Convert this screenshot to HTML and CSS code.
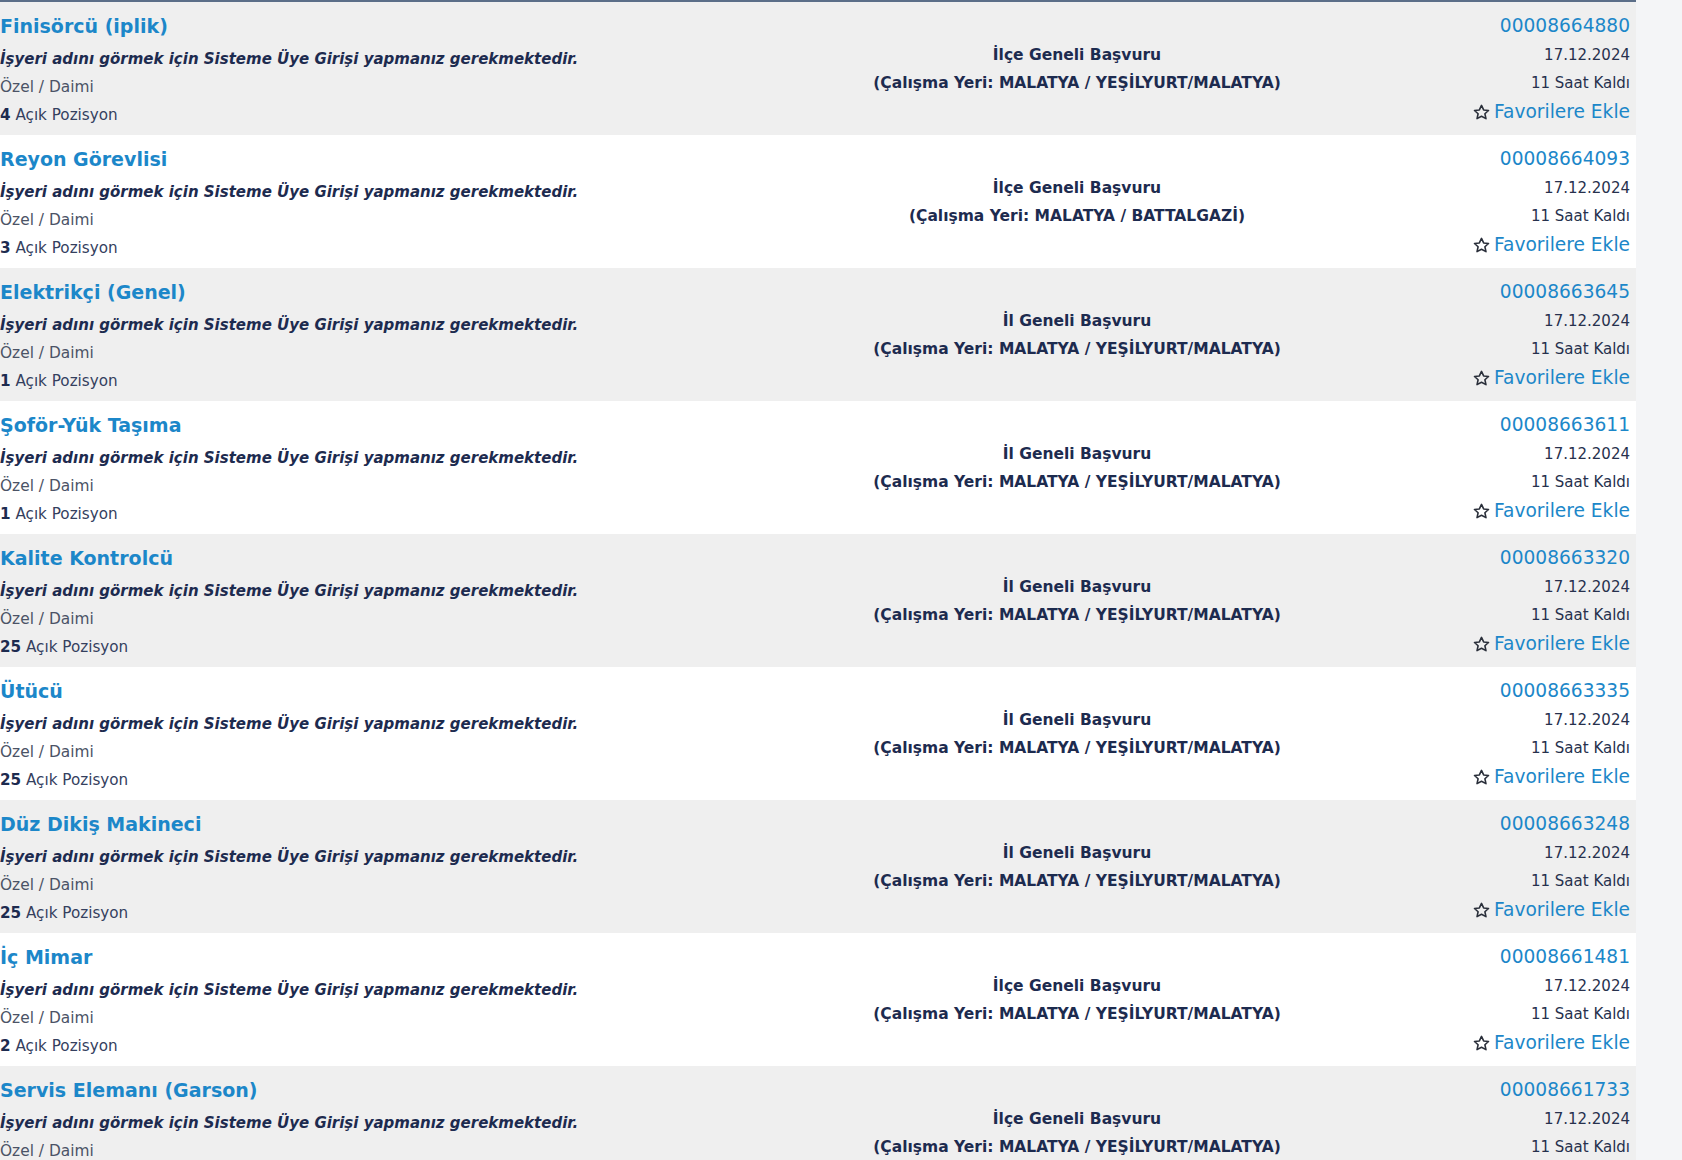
FILE: index.html
```html
<!DOCTYPE html>
<html lang="tr">
  <head>
    <meta charset="UTF-8" />
    <meta name="viewport" content="width=device-width, initial-scale=1.0" />
    <title>İş İlanları</title>
    <link rel="stylesheet" href="styles.css">
  </head>
  <body>
    <div id="page">
      <div id="jobList">
        <section class="job">
          <div class="jobInfo">
            <a class="jobTitle" href="#">Finisörcü (iplik)</a>
            <p class="employer">İşyeri adını görmek için Sisteme Üye Girişi yapmanız gerekmektedir.</p>
            <p class="jobType">Özel / Daimi</p>
            <p class="positions"><b>4</b> Açık Pozisyon</p>
          </div>
          <div class="jobPlace">
            <p>İlçe Geneli Başvuru</p>
            <p>(Çalışma Yeri: MALATYA / YEŞİLYURT/MALATYA)</p>
          </div>
          <div class="jobMeta">
            <a class="jobNo" href="#">00008664880</a>
            <p>17.12.2024</p>
            <p>11 Saat Kaldı</p>
            <a class="fav" href="#"><svg viewBox="0 0 16 16"><path d="M8 1.3l2 4.3 4.6.5-3.4 3.1 1 4.6L8 11.5l-4.2 2.3 1-4.6L1.4 6.1 6 5.6z"/></svg>Favorilere Ekle</a>
          </div>
        </section>
        <section class="job">
          <div class="jobInfo">
            <a class="jobTitle" href="#">Reyon Görevlisi</a>
            <p class="employer">İşyeri adını görmek için Sisteme Üye Girişi yapmanız gerekmektedir.</p>
            <p class="jobType">Özel / Daimi</p>
            <p class="positions"><b>3</b> Açık Pozisyon</p>
          </div>
          <div class="jobPlace">
            <p>İlçe Geneli Başvuru</p>
            <p>(Çalışma Yeri: MALATYA / BATTALGAZİ)</p>
          </div>
          <div class="jobMeta">
            <a class="jobNo" href="#">00008664093</a>
            <p>17.12.2024</p>
            <p>11 Saat Kaldı</p>
            <a class="fav" href="#"><svg viewBox="0 0 16 16"><path d="M8 1.3l2 4.3 4.6.5-3.4 3.1 1 4.6L8 11.5l-4.2 2.3 1-4.6L1.4 6.1 6 5.6z"/></svg>Favorilere Ekle</a>
          </div>
        </section>
        <section class="job">
          <div class="jobInfo">
            <a class="jobTitle" href="#">Elektrikçi (Genel)</a>
            <p class="employer">İşyeri adını görmek için Sisteme Üye Girişi yapmanız gerekmektedir.</p>
            <p class="jobType">Özel / Daimi</p>
            <p class="positions"><b>1</b> Açık Pozisyon</p>
          </div>
          <div class="jobPlace">
            <p>İl Geneli Başvuru</p>
            <p>(Çalışma Yeri: MALATYA / YEŞİLYURT/MALATYA)</p>
          </div>
          <div class="jobMeta">
            <a class="jobNo" href="#">00008663645</a>
            <p>17.12.2024</p>
            <p>11 Saat Kaldı</p>
            <a class="fav" href="#"><svg viewBox="0 0 16 16"><path d="M8 1.3l2 4.3 4.6.5-3.4 3.1 1 4.6L8 11.5l-4.2 2.3 1-4.6L1.4 6.1 6 5.6z"/></svg>Favorilere Ekle</a>
          </div>
        </section>
        <section class="job">
          <div class="jobInfo">
            <a class="jobTitle" href="#">Şoför-Yük Taşıma</a>
            <p class="employer">İşyeri adını görmek için Sisteme Üye Girişi yapmanız gerekmektedir.</p>
            <p class="jobType">Özel / Daimi</p>
            <p class="positions"><b>1</b> Açık Pozisyon</p>
          </div>
          <div class="jobPlace">
            <p>İl Geneli Başvuru</p>
            <p>(Çalışma Yeri: MALATYA / YEŞİLYURT/MALATYA)</p>
          </div>
          <div class="jobMeta">
            <a class="jobNo" href="#">00008663611</a>
            <p>17.12.2024</p>
            <p>11 Saat Kaldı</p>
            <a class="fav" href="#"><svg viewBox="0 0 16 16"><path d="M8 1.3l2 4.3 4.6.5-3.4 3.1 1 4.6L8 11.5l-4.2 2.3 1-4.6L1.4 6.1 6 5.6z"/></svg>Favorilere Ekle</a>
          </div>
        </section>
        <section class="job">
          <div class="jobInfo">
            <a class="jobTitle" href="#">Kalite Kontrolcü</a>
            <p class="employer">İşyeri adını görmek için Sisteme Üye Girişi yapmanız gerekmektedir.</p>
            <p class="jobType">Özel / Daimi</p>
            <p class="positions"><b>25</b> Açık Pozisyon</p>
          </div>
          <div class="jobPlace">
            <p>İl Geneli Başvuru</p>
            <p>(Çalışma Yeri: MALATYA / YEŞİLYURT/MALATYA)</p>
          </div>
          <div class="jobMeta">
            <a class="jobNo" href="#">00008663320</a>
            <p>17.12.2024</p>
            <p>11 Saat Kaldı</p>
            <a class="fav" href="#"><svg viewBox="0 0 16 16"><path d="M8 1.3l2 4.3 4.6.5-3.4 3.1 1 4.6L8 11.5l-4.2 2.3 1-4.6L1.4 6.1 6 5.6z"/></svg>Favorilere Ekle</a>
          </div>
        </section>
        <section class="job">
          <div class="jobInfo">
            <a class="jobTitle" href="#">Ütücü</a>
            <p class="employer">İşyeri adını görmek için Sisteme Üye Girişi yapmanız gerekmektedir.</p>
            <p class="jobType">Özel / Daimi</p>
            <p class="positions"><b>25</b> Açık Pozisyon</p>
          </div>
          <div class="jobPlace">
            <p>İl Geneli Başvuru</p>
            <p>(Çalışma Yeri: MALATYA / YEŞİLYURT/MALATYA)</p>
          </div>
          <div class="jobMeta">
            <a class="jobNo" href="#">00008663335</a>
            <p>17.12.2024</p>
            <p>11 Saat Kaldı</p>
            <a class="fav" href="#"><svg viewBox="0 0 16 16"><path d="M8 1.3l2 4.3 4.6.5-3.4 3.1 1 4.6L8 11.5l-4.2 2.3 1-4.6L1.4 6.1 6 5.6z"/></svg>Favorilere Ekle</a>
          </div>
        </section>
        <section class="job">
          <div class="jobInfo">
            <a class="jobTitle" href="#">Düz Dikiş Makineci</a>
            <p class="employer">İşyeri adını görmek için Sisteme Üye Girişi yapmanız gerekmektedir.</p>
            <p class="jobType">Özel / Daimi</p>
            <p class="positions"><b>25</b> Açık Pozisyon</p>
          </div>
          <div class="jobPlace">
            <p>İl Geneli Başvuru</p>
            <p>(Çalışma Yeri: MALATYA / YEŞİLYURT/MALATYA)</p>
          </div>
          <div class="jobMeta">
            <a class="jobNo" href="#">00008663248</a>
            <p>17.12.2024</p>
            <p>11 Saat Kaldı</p>
            <a class="fav" href="#"><svg viewBox="0 0 16 16"><path d="M8 1.3l2 4.3 4.6.5-3.4 3.1 1 4.6L8 11.5l-4.2 2.3 1-4.6L1.4 6.1 6 5.6z"/></svg>Favorilere Ekle</a>
          </div>
        </section>
        <section class="job">
          <div class="jobInfo">
            <a class="jobTitle" href="#">İç Mimar</a>
            <p class="employer">İşyeri adını görmek için Sisteme Üye Girişi yapmanız gerekmektedir.</p>
            <p class="jobType">Özel / Daimi</p>
            <p class="positions"><b>2</b> Açık Pozisyon</p>
          </div>
          <div class="jobPlace">
            <p>İlçe Geneli Başvuru</p>
            <p>(Çalışma Yeri: MALATYA / YEŞİLYURT/MALATYA)</p>
          </div>
          <div class="jobMeta">
            <a class="jobNo" href="#">00008661481</a>
            <p>17.12.2024</p>
            <p>11 Saat Kaldı</p>
            <a class="fav" href="#"><svg viewBox="0 0 16 16"><path d="M8 1.3l2 4.3 4.6.5-3.4 3.1 1 4.6L8 11.5l-4.2 2.3 1-4.6L1.4 6.1 6 5.6z"/></svg>Favorilere Ekle</a>
          </div>
        </section>
        <section class="job">
          <div class="jobInfo">
            <a class="jobTitle" href="#">Servis Elemanı (Garson)</a>
            <p class="employer">İşyeri adını görmek için Sisteme Üye Girişi yapmanız gerekmektedir.</p>
            <p class="jobType">Özel / Daimi</p>
            <p class="positions"><b>1</b> Açık Pozisyon</p>
          </div>
          <div class="jobPlace">
            <p>İlçe Geneli Başvuru</p>
            <p>(Çalışma Yeri: MALATYA / YEŞİLYURT/MALATYA)</p>
          </div>
          <div class="jobMeta">
            <a class="jobNo" href="#">00008661733</a>
            <p>17.12.2024</p>
            <p>11 Saat Kaldı</p>
            <a class="fav" href="#"><svg viewBox="0 0 16 16"><path d="M8 1.3l2 4.3 4.6.5-3.4 3.1 1 4.6L8 11.5l-4.2 2.3 1-4.6L1.4 6.1 6 5.6z"/></svg>Favorilere Ekle</a>
          </div>
        </section>
      </div>
    </div>
  </body>
</html>
```

FILE: styles.css
```css
*,
html,
body {
  padding: 0;
  margin: 0;
  box-sizing: border-box;
}

html,
body {
  height: 100%;
  overflow: hidden;
}

body {
  background-color: #f4f5f7;
  font-family: "DejaVu Sans", Verdana, sans-serif;
  color: #1f2e52;
}

a {
  text-decoration: none;
}

#page {
  width: 1636px;
}

#jobList {
  border-top: 2px solid #5b6e88;
}

.job {
  height: 133px;
  display: grid;
  grid-template-columns: 720px 714px 202px;
  align-items: start;
  background-color: #efefef;
}

.job:nth-child(even) {
  background-color: #ffffff;
}

.jobInfo {
  padding-top: 9px;
  display: flex;
  flex-direction: column;
  white-space: nowrap;
}

.jobTitle {
  font-size: 19px;
  font-weight: bold;
  line-height: 30px;
  color: #1c87c9;
  margin-bottom: 4px;
}

.employer {
  font-size: 15px;
  font-weight: bold;
  font-style: italic;
  line-height: 28px;
  color: #1d2b4f;
}

.jobType {
  font-size: 15.4px;
  line-height: 28px;
  color: #4b5366;
}

.positions {
  font-size: 15.2px;
  line-height: 28px;
  color: #34405e;
}

.positions b {
  color: #1d2b4f;
}

.jobPlace {
  align-self: center;
  text-align: center;
  font-size: 15.5px;
  font-weight: bold;
  line-height: 28px;
  color: #1d2b4f;
  white-space: nowrap;
}

.jobMeta {
  padding-top: 9px;
  padding-right: 6px;
  display: flex;
  flex-direction: column;
  align-items: flex-end;
  font-size: 15px;
  line-height: 28px;
  color: #27314d;
  white-space: nowrap;
}

.jobNo {
  font-size: 18.6px;
  line-height: 30px;
  color: #1c87c9;
}

.fav {
  display: flex;
  align-items: center;
  gap: 4px;
  font-size: 18.6px;
  line-height: 30px;
  color: #1c87c9;
}

.fav svg {
  width: 17px;
  height: 17px;
  fill: none;
  stroke: #2a2f3a;
  stroke-width: 1.5;
  stroke-linejoin: round;
}
```
